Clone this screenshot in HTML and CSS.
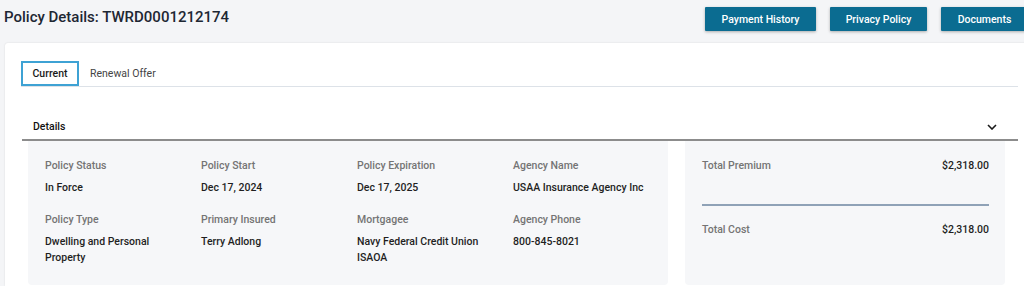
FILE: index.html
```html
<!DOCTYPE html>
<html lang="en">
<head>
  <meta charset="UTF-8" />
  <meta name="viewport" content="width=device-width, initial-scale=1.0" />
  <title>Policy Details</title>
  <link rel="stylesheet" href="styles.css">
</head>
<body>
  <div class="page">
    <div class="header">
      <h1>Policy Details: TWRD0001212174</h1>
      <div class="actions">
        <button class="btn">Payment History</button>
        <button class="btn">Privacy Policy</button>
        <button class="btn">Documents</button>
      </div>
    </div>

    <div class="card">
      <div class="tabs">
        <div class="tab active">Current</div>
        <div class="tab">Renewal Offer</div>
      </div>

      <div class="section">
        <div class="section-head">
          <span>Details</span>
          <svg class="chevron" width="10" height="6" viewBox="0 0 10 6">
            <path d="M1 1 L5 5 L9 1" fill="none" stroke="#1a1a1a" stroke-width="1.6" />
          </svg>
        </div>

        <div class="section-body">
          <div class="panel info">
            <div class="field">
              <div class="label">Policy Status</div>
              <div class="value">In Force</div>
            </div>
            <div class="field">
              <div class="label">Policy Start</div>
              <div class="value">Dec 17, 2024</div>
            </div>
            <div class="field">
              <div class="label">Policy Expiration</div>
              <div class="value">Dec 17, 2025</div>
            </div>
            <div class="field">
              <div class="label">Agency Name</div>
              <div class="value">USAA Insurance Agency Inc</div>
            </div>
            <div class="field">
              <div class="label">Policy Type</div>
              <div class="value">Dwelling and Personal Property</div>
            </div>
            <div class="field">
              <div class="label">Primary Insured</div>
              <div class="value">Terry Adlong</div>
            </div>
            <div class="field">
              <div class="label">Mortgagee</div>
              <div class="value">Navy Federal Credit Union ISAOA</div>
            </div>
            <div class="field">
              <div class="label">Agency Phone</div>
              <div class="value">800-845-8021</div>
            </div>
          </div>

          <div class="panel totals">
            <div class="total-row premium">
              <span class="label">Total Premium</span>
              <span class="value">$2,318.00</span>
            </div>
            <div class="total-row">
              <span class="label">Total Cost</span>
              <span class="value">$2,318.00</span>
            </div>
          </div>
        </div>
      </div>
    </div>
  </div>
</body>
</html>
```

FILE: styles.css
```css
body {
  margin: 0;
  background: #f4f5f7;
  font-family: Roboto, 'Liberation Sans', sans-serif;
  overflow: hidden;
}
.page {
  width: 1034px;
  height: 286px;
  overflow: hidden;
}
.header {
  display: flex;
  justify-content: space-between;
  align-items: flex-start;
  height: 43px;
  padding: 0 6px 0 4px;
}
h1 {
  margin: 6px 0 0;
  font-size: 15px;
  font-weight: 500;
  color: #1e2733;
  line-height: 22px;
}
.actions {
  display: flex;
  gap: 14px;
  padding-top: 7px;
}
.btn {
  height: 24px;
  width: 111px;
  padding: 0;
  background: #0b6c91;
  color: #fff;
  border: none;
  border-radius: 1px;
  font-family: inherit;
  font-size: 10.5px;
  font-weight: 500;
  box-shadow: 0 1px 3px rgba(0,0,0,0.3);
}
.btn:nth-child(2) {
  width: 97px;
}
.btn:nth-child(3) {
  width: 87px;
}
.card {
  background: #fff;
  margin-left: 5px;
  padding: 18px 16px 0;
  box-shadow: 0 0 2px rgba(0,0,0,0.12);
  border-radius: 3px 3px 0 0;
  height: 225px;
}
.tabs {
  display: flex;
  align-items: stretch;
  border-bottom: 1px solid #dde2e8;
}
.tab {
  height: 25px;
  line-height: 25px;
  padding: 0 11px;
  font-size: 10.5px;
  color: #444;
}
.tab.active {
  border: 2px solid #3ea2d4;
  height: 21px;
  line-height: 21px;
  width: 54px;
  padding: 0;
  text-align: center;
  font-weight: 500;
  color: #1a1a1a;
}
.section {
  margin: 27px 0 0 1px;
}
.section-head {
  display: flex;
  justify-content: space-between;
  align-items: center;
  height: 25px;
  padding: 0 21px 0 11px;
  border-bottom: 2px solid #8c8c8c;
  font-size: 10.5px;
  font-weight: 500;
  color: #111;
}
.section-body {
  display: flex;
  gap: 17px;
  padding-left: 6px;
}
.panel {
  background: #f6f7f9;
  border-radius: 0 0 4px 4px;
  padding: 17px 17px 15px;
  height: 112px;
}
.info {
  width: 606px;
  display: grid;
  grid-template-columns: repeat(4, 156px);
  row-gap: 16px;
  align-content: start;
}
.label {
  font-size: 10.5px;
  line-height: 16px;
  font-weight: 500;
  color: #747474;
}
.value {
  font-size: 10.5px;
  line-height: 16px;
  font-weight: 500;
  color: #1f1f1f;
  margin-top: 6px;
  padding-right: 20px;
}
.totals {
  width: 287px;
  padding-right: 16px;
}
.total-row {
  display: flex;
  justify-content: space-between;
}
.total-row .value {
  margin: 0;
  padding: 0;
}
.premium {
  padding-bottom: 30px;
  border-bottom: 2px solid #8fa2b7;
  margin-bottom: 16px;
}
```
